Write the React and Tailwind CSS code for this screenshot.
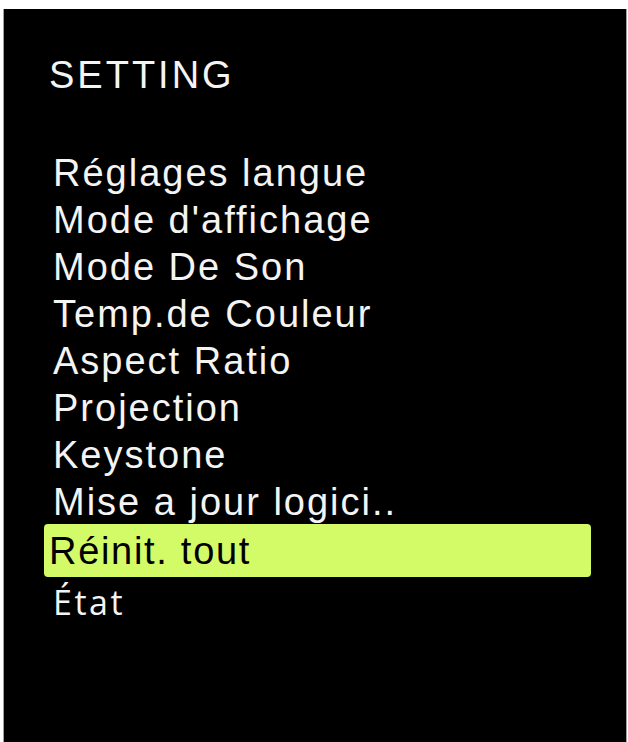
import React from 'react';

const items = [
  'Réglages langue',
  "Mode d'affichage",
  'Mode De Son',
  'Temp.de Couleur',
  'Aspect Ratio',
  'Projection',
  'Keystone',
  'Mise a jour logici..',
];

export default function App() {
  return (
    <div className="w-[628px] h-[742px] bg-white pt-[9px] pl-[3px] overflow-hidden">
      <div
        className="w-[624px] h-[733px] bg-black border-x border-[#a0a0a0] pt-[46px] pl-[44px] text-[#f4f4f4]"
        style={{ fontFamily: '"Liberation Sans", Arial, sans-serif' }}
      >
        {/* Title */}
        <h1 className="text-[38px] leading-[40px] tracking-[3px] font-normal pl-[1px]">SETTING</h1>

        {/* Menu */}
        <ul className="mt-[55px] text-[38px] leading-[47px] tracking-[2px]">
          {items.map((label) => (
            <li key={label} className="pl-[5px]">{label}</li>
          ))}
          <li className="-mt-[2px] w-[547px] h-[53px] leading-[55px] bg-[#d3fb67] rounded-[4px] text-black pl-[5px] -ml-[4px] tracking-[1.7px]">
            Réinit. tout
          </li>
          <li
            className="pl-[5px] text-[34px] leading-[47px] tracking-[2.5px] pt-[2px]"
            style={{ fontFamily: '"Open Sans", "Noto Sans", sans-serif' }}
          >
            État
          </li>
        </ul>
      </div>
    </div>
  );
}
